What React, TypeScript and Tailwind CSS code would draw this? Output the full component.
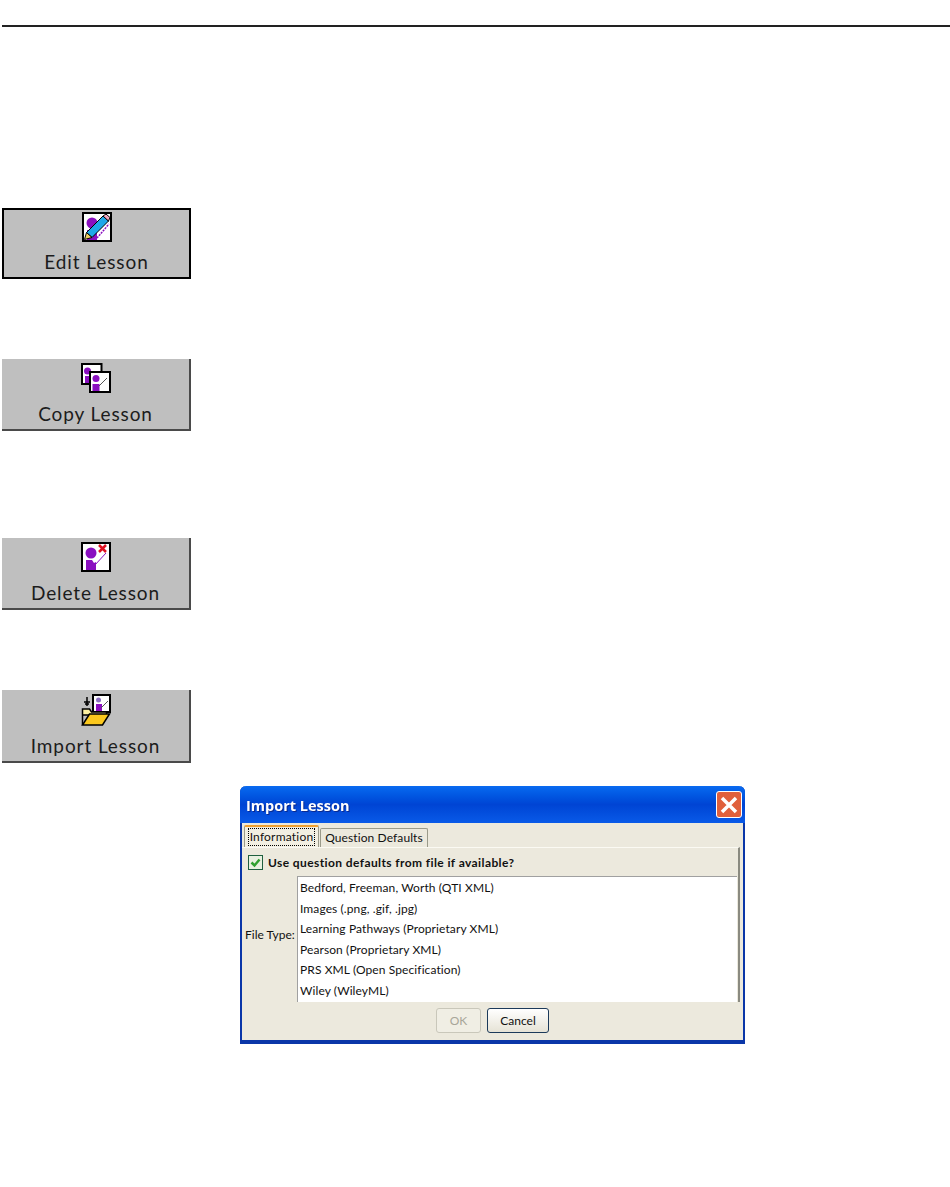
const EditIcon = () => (
  <svg width="30" height="30" viewBox="0 0 30 30" className="block">
    <rect x="1" y="1" width="28" height="28" fill="#fff" stroke="#000" strokeWidth="2" />
    <circle cx="10" cy="11" r="5.500" fill="#8a0fc0" />
    <path d="M5 18h10v10H5z" fill="#8a0fc0" />
    <path d="M15 26L27 12" stroke="#8a0fc0" strokeWidth="1.500" strokeDasharray="2 1" />
    <path d="M21 4l5.500 5L10 25.500 4.500 20.500z" fill="#1fa8e8" stroke="#000" strokeWidth="1" />
    <path d="M21 4l3-2 4 3.500-1.500 3.500z" fill="#f5a8c0" stroke="#000" strokeWidth="1" />
    <path d="M4.500 20.500l5.500 5-7.500 2z" fill="#f0d060" stroke="#000" strokeWidth="1" />
  </svg>
);

const CopyIcon = () => (
  <svg width="30" height="30" viewBox="0 0 30 30" className="block">
    <rect x="1" y="1" width="19.500" height="20" fill="#fff" stroke="#000" strokeWidth="2" />
    <circle cx="6.500" cy="8" r="3.500" fill="#8a0fc0" />
    <rect x="4" y="13" width="6" height="7" fill="#8a0fc0" />
    <rect x="9" y="9" width="20" height="20" fill="#fff" stroke="#000" strokeWidth="2" />
    <circle cx="15" cy="15.500" r="3.500" fill="#8a0fc0" />
    <path d="M11.500 21h7v7h-7z" fill="#8a0fc0" />
    <path d="M18 23l8-8" stroke="#555" strokeWidth="1" />
  </svg>
);

const DeleteIcon = () => (
  <svg width="30" height="30" viewBox="0 0 30 30" className="block">
    <rect x="1" y="1" width="28" height="28" fill="#fff" stroke="#000" strokeWidth="2" />
    <circle cx="10" cy="11" r="5.500" fill="#8a0fc0" />
    <path d="M5 18h6l2 3 2-1v8H5z" fill="#8a0fc0" />
    <path d="M14 23l11-12" stroke="#8a0fc0" strokeWidth="1" />
    <path d="M18 3l7 7M25 3l-7 7" stroke="#e01020" strokeWidth="2.500" />
  </svg>
);

const ImportIcon = () => (
  <svg width="30" height="33" viewBox="0 0 30 33" className="block">
    <path d="M6 3v9M3 8h6M4 10h4" stroke="#000" strokeWidth="1.500" />
    <rect x="12" y="1" width="17" height="17" fill="#fff" stroke="#000" strokeWidth="2" />
    <circle cx="17.500" cy="6" r="2.500" fill="#8a6fc0" />
    <path d="M15 10h6v7h-6z" fill="#8a0fc0" />
    <path d="M20 14l7-7" stroke="#555" strokeWidth="1" />
    <path d="M1.500 31V15h7l2 3h15v3H1.500" fill="#fdf0a0" stroke="#000" strokeWidth="1.500" />
    <path d="M1.500 31l7-11h20l-7 11z" fill="#fbc81e" stroke="#000" strokeWidth="1.500" />
  </svg>
);

const ToolButton = ({ label, icon, active = false, h, mt, pt }: { label: string; icon: React.ReactNode; active?: boolean; h: string; mt: string; pt: string }) => (
  <div
    className={`ml-[2px] w-[189px] ${h} ${mt} ${pt} flex flex-col items-center bg-[#bfbfbf] ${
      active ? "border-2 border-black" : "border-r-2 border-b-2 border-[#4a4a4a]"
    }`}
  >
    <div className="w-[30px]">{icon}</div>
    <div className="mt-auto mb-[4px] text-[19px] leading-[22px] text-[#1c1c1c] font-['Lato'] tracking-[0.9px]">{label}</div>
  </div>
);

const rows = [
  "Bedford, Freeman, Worth (QTI XML)",
  "Images (.png, .gif, .jpg)",
  "Learning Pathways (Proprietary XML)",
  "Pearson (Proprietary XML)",
  "PRS XML (Open Specification)",
  "Wiley (WileyML)",
];

export default function App() {
  return (
    <div className="w-[950px] h-[1187px] bg-white overflow-hidden font-['Lato',sans-serif]">
      <div className="h-[2px] ml-[2px] mt-[25px] bg-[#222]" />
      <ToolButton label="Edit Lesson" icon={<EditIcon />} active h="h-[71px]" mt="mt-[181px]" pt="pt-[2px]" />
      <ToolButton label="Copy Lesson" icon={<CopyIcon />} h="h-[72px]" mt="mt-[80px]" pt="pt-[4px]" />
      <ToolButton label="Delete Lesson" icon={<DeleteIcon />} h="h-[72px]" mt="mt-[107px]" pt="pt-[4px]" />
      <ToolButton label="Import Lesson" icon={<ImportIcon />} h="h-[73px]" mt="mt-[80px]" pt="pt-[4px]" />

      <div className="ml-[240px] mt-[23px] w-[505px] h-[258px] flex flex-col bg-[#ece9dd] border-x-2 border-b-[4px] border-[#0a36a8] rounded-t-[6px]">
        <div className="-mx-[2px] h-[37px] shrink-0 rounded-t-[6px] flex items-center justify-between pl-[6px] pr-[3px] bg-gradient-to-b from-[#0a6af0] via-[#0044d4] to-[#0a5ae8]">
          <span className="text-white font-bold text-[14.500px] pt-[2px] font-['Open_Sans'] drop-shadow-[1px_1px_0_#0a2a90]">Import Lesson</span>
          <div className="w-[26px] h-[27px] rounded-[3px] border border-white bg-[#e0603c] flex items-center justify-center">
            <svg width="20" height="20" viewBox="0 0 20 20">
              <path d="M3 3l14 14M17 3L3 17" stroke="#fff" strokeWidth="3.500" />
            </svg>
          </div>
        </div>

        <div className="h-[24px] shrink-0 flex items-end pl-[2px] pt-[2px]">
          <div className="w-[75px] h-[22px] bg-[#f2efe2] border-x border-[#9a9a8a] border-t-2 border-t-[#f0a030] rounded-t-[2px] flex items-center justify-center">
            <span className="text-[12px] text-[#111] border border-dotted border-black px-[1px] leading-[16px] tracking-[0.2px]">Information</span>
          </div>
          <div className="w-[108px] h-[19px] ml-[1px] bg-[#ece9dd] border-x border-t border-[#9a9a8a] rounded-t-[2px] flex items-center justify-center">
            <span className="text-[12px] text-[#111] leading-[16px] tracking-[0.1px]">Question Defaults</span>
          </div>
        </div>

        <div className="flex-1 min-h-0 flex flex-col border-t border-[#fbfaf3] mr-[3px] border-r-2 border-r-[#8a8a80]">
          <div className="h-[28px] shrink-0 flex items-center pl-[6px]">
            <div className="w-[15px] h-[15px] border border-[#1f5f3f] bg-[#e8f0e0] flex items-center justify-center">
              <svg width="13" height="13" viewBox="0 0 13 13">
                <path d="M2.500 6.500l3 3 5-6" fill="none" stroke="#2fa02f" strokeWidth="2.500" />
              </svg>
            </div>
            <span className="ml-[5px] pt-[2px] text-[12px] font-bold text-[#111] tracking-[0.4px]">Use question defaults from file if available?</span>
          </div>
          <div className="flex-1 min-h-0 flex">
            <div className="w-[55px] shrink-0 flex items-center pl-[3px] pb-[8px] text-[12px] text-[#111] whitespace-nowrap">File Type:</div>
            <div className="w-[440px] border-t border-l border-[#a0a0a0] bg-white pl-[2px] pt-[1px]">
              {rows.map((r) => (
                <div key={r} className="h-[20.500px] flex items-center text-[12px] text-[#111] tracking-[0.1px] whitespace-nowrap">{r}</div>
              ))}
            </div>
          </div>
        </div>

        <div className="h-[38px] shrink-0 flex pl-[194px] pt-[6px] gap-[6px]">
          <div className="w-[45px] h-[25px] rounded-[3px] border border-[#c9c7ba] bg-[#f0eee4] flex items-center justify-center text-[12px] text-[#a8a699]">OK</div>
          <div className="w-[62px] h-[25px] rounded-[3px] border border-[#1c3a5a] bg-gradient-to-b from-white to-[#e6e3d6] flex items-center justify-center text-[12px] text-[#111]">Cancel</div>
        </div>
      </div>
    </div>
  );
}
